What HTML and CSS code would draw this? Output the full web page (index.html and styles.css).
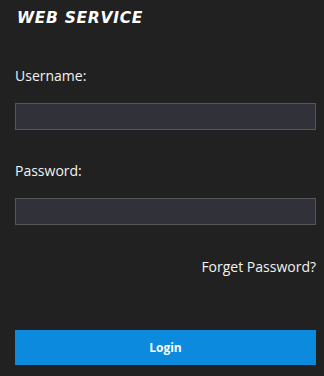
FILE: index.html
```html
<!DOCTYPE html>
<html>
<head>
<meta charset="utf-8">
<link rel="stylesheet" href="styles.css">
</head>
<body>
<div class="page">
  <h1 class="title">WEB SERVICE</h1>
  <div class="field">
    <label class="label">Username:</label>
    <input class="input" type="text">
  </div>
  <div class="field">
    <label class="label">Password:</label>
    <input class="input" type="password">
  </div>
  <div class="forget">Forget Password?</div>
  <button class="login">Login</button>
</div>
</body>
</html>
```
FILE: styles.css
```css
html, body {
  margin: 0;
  padding: 0;
  background: #212121;
  height: 100%;
}
.page {
  padding: 0 8px 0 15px;
  display: flex;
  flex-direction: column;
  font-family: "Open Sans", "Noto Sans", sans-serif;
  color: #f2f2f2;
}
.title {
  margin: 8px 0 0 2px;
  font-family: "DejaVu Sans", sans-serif;
  font-weight: bold;
  font-style: italic;
  font-size: 15.5px;
  letter-spacing: 0.7px;
  line-height: 20px;
  color: #ffffff;
}
.field {
  display: flex;
  flex-direction: column;
}
.label {
  font-size: 14px;
  line-height: 20px;
  margin-top: 38px;
}
.field + .field .label {
  margin-top: 31px;
}
.input {
  margin-top: 17px;
  height: 27px;
  box-sizing: border-box;
  background: #31313a;
  border: 1px solid #55555c;
  outline: none;
  padding: 0 6px;
  color: #fff;
}
.forget {
  align-self: flex-end;
  font-size: 14px;
  line-height: 20px;
  margin-top: 32px;
  color: #f2f2f2;
}
.login {
  margin-top: 53px;
  height: 35px;
  border: none;
  background: #0c8add;
  color: #fff;
  font-family: "Open Sans", "Noto Sans", sans-serif;
  font-weight: bold;
  font-size: 12px;
}
```
